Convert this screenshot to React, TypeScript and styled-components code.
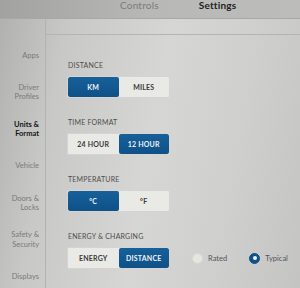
import React from 'react'
import styled, { createGlobalStyle } from 'styled-components'

const Global = createGlobalStyle`
  html, body {
    margin: 0;
    padding: 0;
    width: 300px;
    height: 288px;
    overflow: hidden;
  }
  body {
    font-family: Lato, "Open Sans", "Liberation Sans", sans-serif;
  }
`

const Screen = styled.div`
  width: 300px;
  height: 288px;
  overflow: hidden;
  display: flex;
  flex-direction: column;
  background: linear-gradient(100deg, #b0b0ae 0%, #c8c8c6 20%, #d6d6d4 50%, #cfcfcd 75%, #c4c4c2 100%);
`

const TopBar = styled.div`
  height: 19px;
  flex-shrink: 0;
  display: flex;
  align-items: flex-start;
  border-bottom: 1px solid #a8a8a6;
  background: linear-gradient(90deg, #a2a2a0, #b8b8b6 50%, #bcbcba);
  box-sizing: border-box;
`

const TabRow = styled.div`
  display: flex;
  gap: 40px;
  padding-left: 120px;
`

const Tab = styled.div<{ $active?: boolean }>`
  font-size: 10px;
  line-height: 11px;
  color: ${(p) => (p.$active ? '#1e1e1e' : '#7c7c7a')};
  font-weight: ${(p) => (p.$active ? 700 : 400)};
  letter-spacing: 0.2px;
`

const Body = styled.div`
  flex: 1;
  display: flex;
  min-height: 0;
`

const Sidebar = styled.div`
  width: 46px;
  flex-shrink: 0;
  border-right: 1px solid #b2b2b0;
  padding-top: 18px;
  box-sizing: border-box;
  display: flex;
  flex-direction: column;
`

const NavItem = styled.div<{ $active?: boolean }>`
  height: 36.9px;
  display: flex;
  align-items: center;
  justify-content: flex-end;
  padding-right: 6px;
  text-align: right;
  white-space: pre-line;
  font-size: 7.5px;
  line-height: 9.5px;
  color: ${(p) => (p.$active ? '#151515' : '#7a7a78')};
  font-weight: ${(p) => (p.$active ? 700 : 400)};
  flex-shrink: 0;
`

const Main = styled.div`
  flex: 1;
  padding-top: 15px;
  display: flex;
  flex-direction: column;
`

const Panel = styled.div`
  flex: 1;
  border-top: 1px solid #b4b4b2;
  padding: 26px 0 0 21px;
  display: flex;
  flex-direction: column;
  gap: 20px;
`

const Group = styled.div`
  display: flex;
  flex-direction: column;
  gap: 6px;
`

const Label = styled.div`
  font-size: 7px;
  line-height: 9px;
  padding-left: 1px;
  color: #4e4e4c;
  letter-spacing: 0.2px;
  text-transform: uppercase;
`

const Row = styled.div`
  display: flex;
  align-items: center;
`

const Segmented = styled.div`
  display: flex;
  width: 103px;
  height: 22px;
  border: 1px solid #d4d4d2;
  border-radius: 2px;
  box-sizing: border-box;
  overflow: hidden;
  background: #e9e9e6;
`

const Segment = styled.div<{ $on?: boolean }>`
  flex: 1;
  display: flex;
  align-items: center;
  justify-content: center;
  font-size: 7px;
  font-weight: 700;
  letter-spacing: 0.2px;
  color: ${(p) => (p.$on ? '#eef2f6' : '#3a3a38')};
  background: ${(p) => (p.$on ? 'linear-gradient(180deg, #17609a, #0f5188)' : 'transparent')};
  border-radius: ${(p) => (p.$on ? '2px' : '0')};
`

const Radios = styled.div`
  display: flex;
  align-items: center;
  margin-left: 22px;
  gap: 22px;
`

const Radio = styled.div`
  display: flex;
  align-items: center;
  gap: 5px;
  font-size: 7.5px;
  color: #55555a;
`

const Dot = styled.div<{ $on?: boolean }>`
  width: 11px;
  height: 11px;
  border-radius: 50%;
  box-sizing: border-box;
  display: flex;
  align-items: center;
  justify-content: center;
  background: ${(p) => (p.$on ? '#0f5188' : '#e6e6de')};
  border: 1px solid ${(p) => (p.$on ? '#0f5188' : '#d8d8d0')};
  &::after {
    content: '';
    display: ${(p) => (p.$on ? 'block' : 'none')};
    width: 4px;
    height: 4px;
    border-radius: 50%;
    background: #f2f2f2;
  }
`

const nav = [
  'Apps',
  'Driver\nProfiles',
  'Units &\nFormat',
  'Vehicle',
  'Doors &\nLocks',
  'Safety &\nSecurity',
  'Displays',
]

const groups = [
  { label: 'Distance', options: ['KM', 'MILES'], on: 0 },
  { label: 'Time Format', options: ['24 HOUR', '12 HOUR'], on: 1 },
  { label: 'Temperature', options: ['°C', '°F'], on: 0 },
  { label: 'Energy & Charging', options: ['ENERGY', 'DISTANCE'], on: 1, radios: true },
]

export default function App() {
  return (
    <Screen>
      <Global />
      <TopBar>
        <TabRow>
          <Tab>Controls</Tab>
          <Tab $active>Settings</Tab>
        </TabRow>
      </TopBar>
      <Body>
        <Sidebar>
          {nav.map((n, i) => (
            <NavItem key={n} $active={i === 2}>
              {n}
            </NavItem>
          ))}
        </Sidebar>
        <Main>
          <Panel>
            {groups.map((g) => (
              <Group key={g.label}>
                <Label>{g.label}</Label>
                <Row>
                  <Segmented>
                    {g.options.map((o, i) => (
                      <Segment key={o} $on={i === g.on}>
                        {o}
                      </Segment>
                    ))}
                  </Segmented>
                  {g.radios && (
                    <Radios>
                      <Radio>
                        <Dot />
                        Rated
                      </Radio>
                      <Radio>
                        <Dot $on />
                        Typical
                      </Radio>
                    </Radios>
                  )}
                </Row>
              </Group>
            ))}
          </Panel>
        </Main>
      </Body>
    </Screen>
  )
}
